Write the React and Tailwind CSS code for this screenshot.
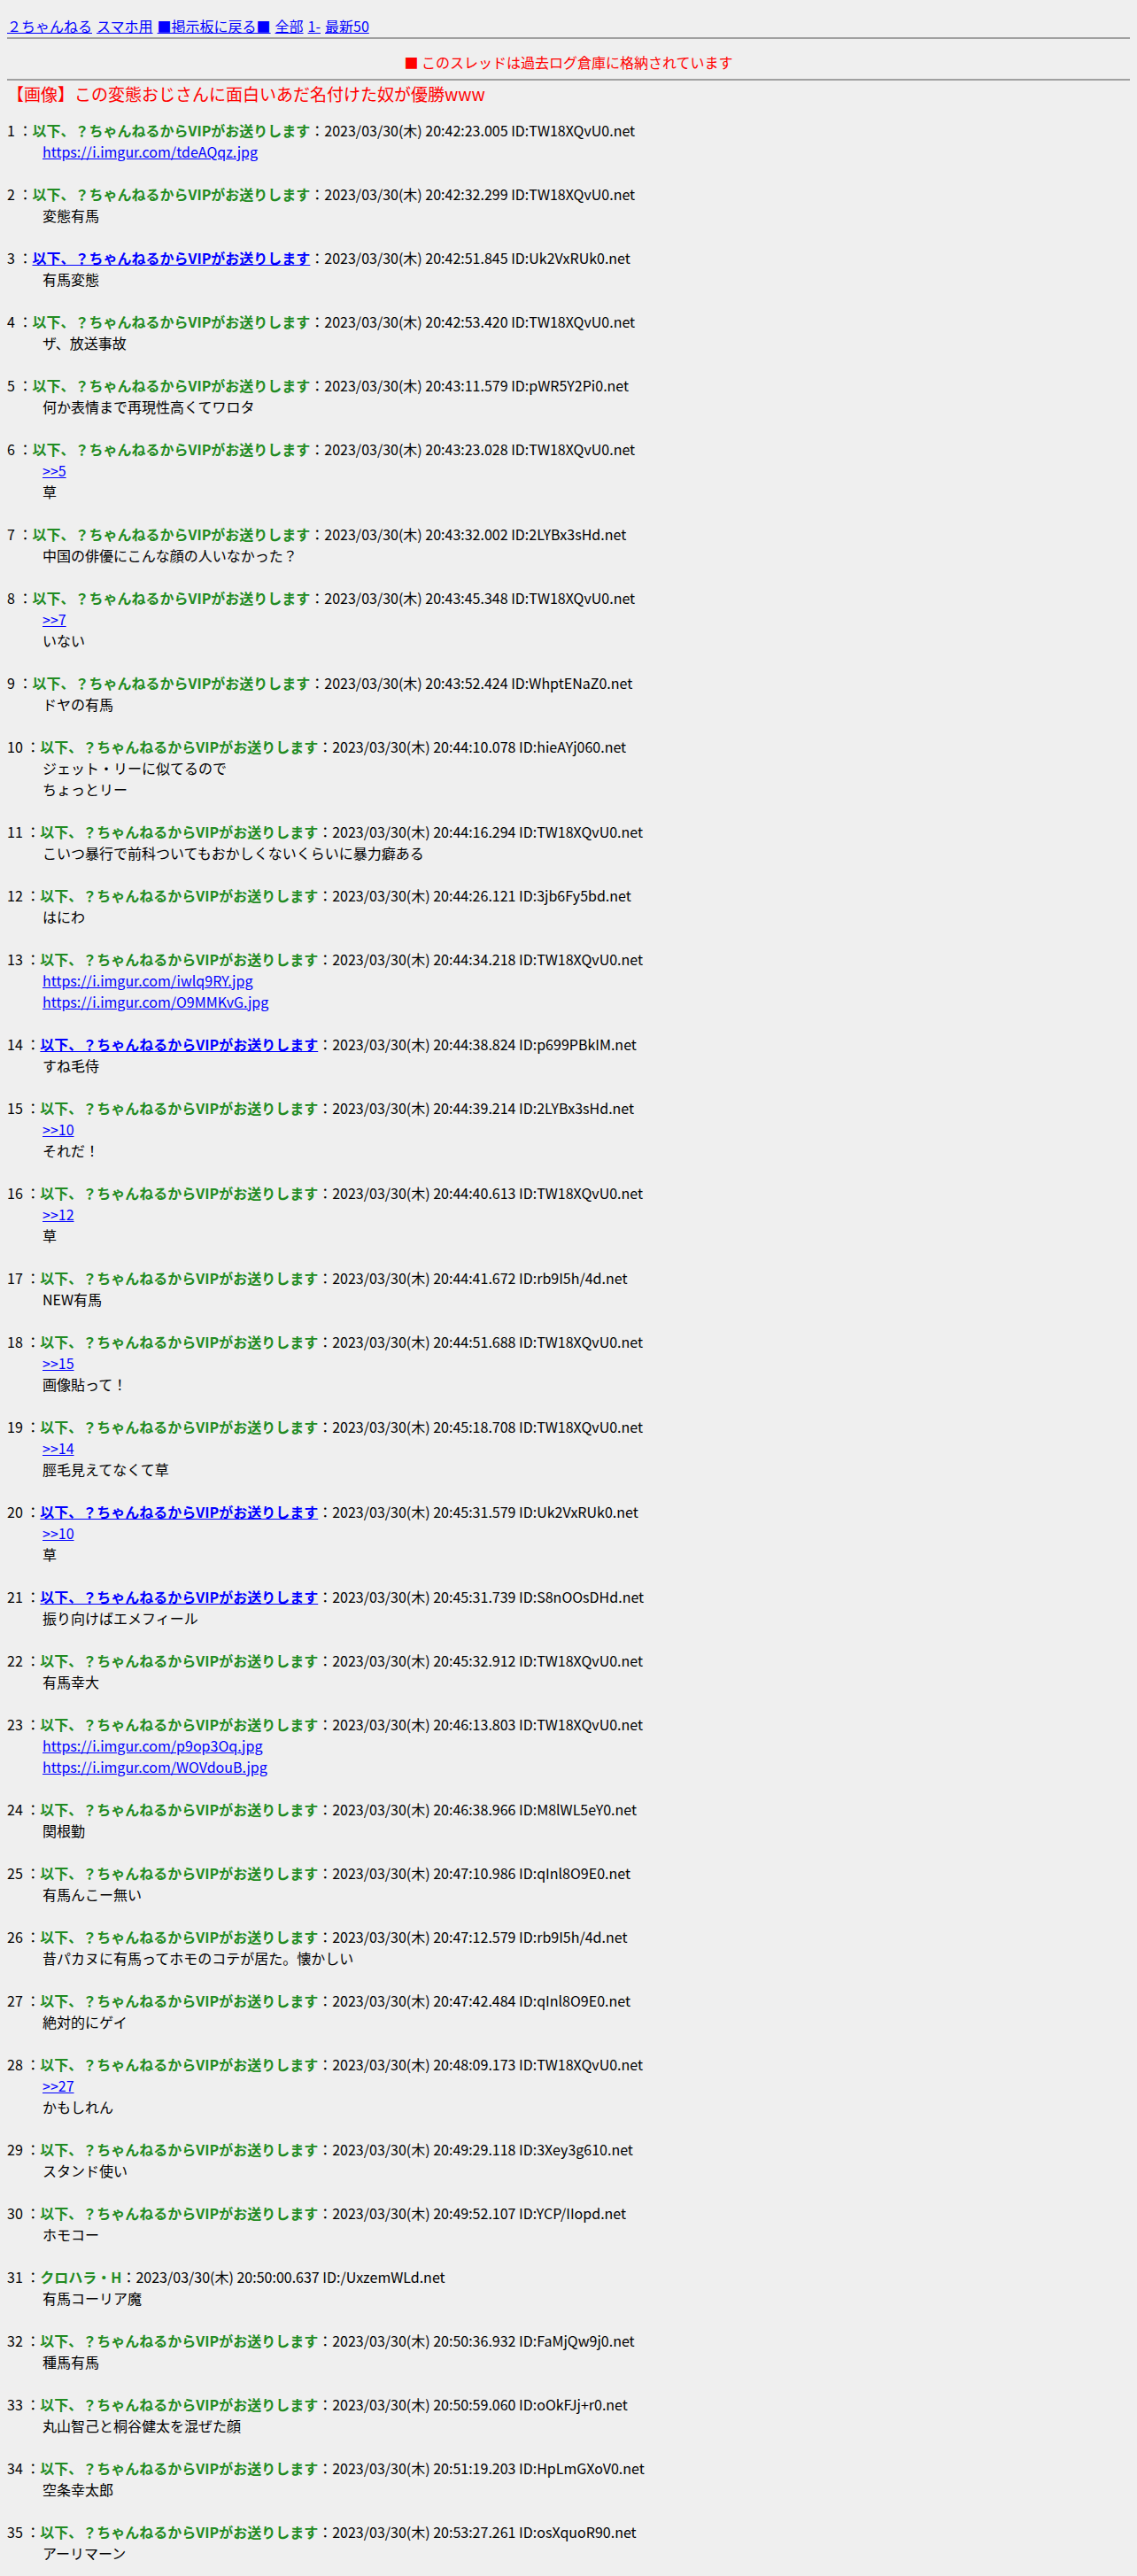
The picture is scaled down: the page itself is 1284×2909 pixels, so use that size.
import React from 'react';

const VIP = '以下、？ちゃんねるからVIPがお送りします';

// スレッドの書き込み (mail: メール欄ありで名前がリンクになるもの)
const posts = [
  { n: 1, t: '20:42:23.005', id: 'TW18XQvU0', body: ['https://i.imgur.com/tdeAQqz.jpg'] },
  { n: 2, t: '20:42:32.299', id: 'TW18XQvU0', body: ['変態有馬'] },
  { n: 3, t: '20:42:51.845', id: 'Uk2VxRUk0', mail: true, body: ['有馬変態'] },
  { n: 4, t: '20:42:53.420', id: 'TW18XQvU0', body: ['ザ、放送事故'] },
  { n: 5, t: '20:43:11.579', id: 'pWR5Y2Pi0', body: ['何か表情まで再現性高くてワロタ'] },
  { n: 6, t: '20:43:23.028', id: 'TW18XQvU0', body: ['>>5', '草'] },
  { n: 7, t: '20:43:32.002', id: '2LYBx3sHd', body: ['中国の俳優にこんな顔の人いなかった？'] },
  { n: 8, t: '20:43:45.348', id: 'TW18XQvU0', body: ['>>7', 'いない'] },
  { n: 9, t: '20:43:52.424', id: 'WhptENaZ0', body: ['ドヤの有馬'] },
  { n: 10, t: '20:44:10.078', id: 'hieAYj060', body: ['ジェット・リーに似てるので', 'ちょっとリー'] },
  { n: 11, t: '20:44:16.294', id: 'TW18XQvU0', body: ['こいつ暴行で前科ついてもおかしくないくらいに暴力癖ある'] },
  { n: 12, t: '20:44:26.121', id: '3jb6Fy5bd', body: ['はにわ'] },
  { n: 13, t: '20:44:34.218', id: 'TW18XQvU0', body: ['https://i.imgur.com/iwlq9RY.jpg', 'https://i.imgur.com/O9MMKvG.jpg'] },
  { n: 14, t: '20:44:38.824', id: 'p699PBkIM', mail: true, body: ['すね毛侍'] },
  { n: 15, t: '20:44:39.214', id: '2LYBx3sHd', body: ['>>10', 'それだ！'] },
  { n: 16, t: '20:44:40.613', id: 'TW18XQvU0', body: ['>>12', '草'] },
  { n: 17, t: '20:44:41.672', id: 'rb9I5h/4d', body: ['NEW有馬'] },
  { n: 18, t: '20:44:51.688', id: 'TW18XQvU0', body: ['>>15', '画像貼って！'] },
  { n: 19, t: '20:45:18.708', id: 'TW18XQvU0', body: ['>>14', '脛毛見えてなくて草'] },
  { n: 20, t: '20:45:31.579', id: 'Uk2VxRUk0', mail: true, body: ['>>10', '草'] },
  { n: 21, t: '20:45:31.739', id: 'S8nOOsDHd', mail: true, body: ['振り向けばエメフィール'] },
  { n: 22, t: '20:45:32.912', id: 'TW18XQvU0', body: ['有馬幸大'] },
  { n: 23, t: '20:46:13.803', id: 'TW18XQvU0', body: ['https://i.imgur.com/p9op3Oq.jpg', 'https://i.imgur.com/WOVdouB.jpg'] },
  { n: 24, t: '20:46:38.966', id: 'M8lWL5eY0', body: ['関根勤'] },
  { n: 25, t: '20:47:10.986', id: 'qInl8O9E0', body: ['有馬んこー無い'] },
  { n: 26, t: '20:47:12.579', id: 'rb9I5h/4d', body: ['昔パカヌに有馬ってホモのコテが居た。懐かしい'] },
  { n: 27, t: '20:47:42.484', id: 'qInl8O9E0', body: ['絶対的にゲイ'] },
  { n: 28, t: '20:48:09.173', id: 'TW18XQvU0', body: ['>>27', 'かもしれん'] },
  { n: 29, t: '20:49:29.118', id: '3Xey3g610', body: ['スタンド使い'] },
  { n: 30, t: '20:49:52.107', id: 'YCP/IIopd', body: ['ホモコー'] },
  { n: 31, t: '20:50:00.637', id: '/UxzemWLd', name: 'クロハラ・H', body: ['有馬コーリア魔'] },
  { n: 32, t: '20:50:36.932', id: 'FaMjQw9j0', body: ['種馬有馬'] },
  { n: 33, t: '20:50:59.060', id: 'oOkFJj+r0', body: ['丸山智己と桐谷健太を混ぜた顔'] },
  { n: 34, t: '20:51:19.203', id: 'HpLmGXoV0', body: ['空条幸太郎'] },
  { n: 35, t: '20:53:27.261', id: 'osXquoR90', body: ['アーリマーン'] },
];

function Line({ text }) {
  if (text.startsWith('http') || text.startsWith('>>')) {
    return (
      <div>
        <a href="#" className="text-[#0000ff] underline">{text}</a>
      </div>
    );
  }
  return <div>{text}</div>;
}

function Post({ p }) {
  const name = p.name || VIP;
  return (
    <div className="mb-6">
      <div className="whitespace-nowrap">
        {p.n} ：
        {p.mail ? (
          <a href="#" className="font-bold text-[#0000ff] underline">{name}</a>
        ) : (
          <b className="text-[#228b22]">{name}</b>
        )}
        ：2023/03/30(木) {p.t} ID:{p.id}.net
      </div>
      <div className="pl-10">
        {p.body.map((l, i) => (
          <Line key={i} text={l} />
        ))}
      </div>
    </div>
  );
}

export default function App() {
  return (
    <div
      className="min-h-screen bg-[#efefef] px-2 pt-[17px] text-[16px] leading-6 text-black"
      style={{ fontFamily: '"Noto Sans CJK JP", "Noto Sans", sans-serif' }}
    >
      <div className="flex gap-[5px]">
        <a href="#" className="text-[#0000ff] underline">２ちゃんねる</a>
        <a href="#" className="text-[#0000ff] underline">スマホ用</a>
        <a href="#" className="text-[#0000ff] underline">■掲示板に戻る■</a>
        <a href="#" className="text-[#0000ff] underline">全部</a>
        <a href="#" className="text-[#0000ff] underline">1-</a>
        <a href="#" className="text-[#0000ff] underline">最新50</a>
      </div>
      <div className="mt-px border-t-2 border-[#a0a0a0]" />
      <div className="mt-[14px] text-center text-[#ff0000]">■ このスレッドは過去ログ倉庫に格納されています</div>
      <div className="mt-[7px] border-t-2 border-[#a0a0a0]" />
      <h1 className="mt-[3px] text-[19px] leading-6 text-[#ff0000]">【画像】この変態おじさんに面白いあだ名付けた奴が優勝www</h1>
      <div className="mt-[17px]">
        {posts.map((p) => (
          <Post key={p.n} p={p} />
        ))}
      </div>
    </div>
  );
}
